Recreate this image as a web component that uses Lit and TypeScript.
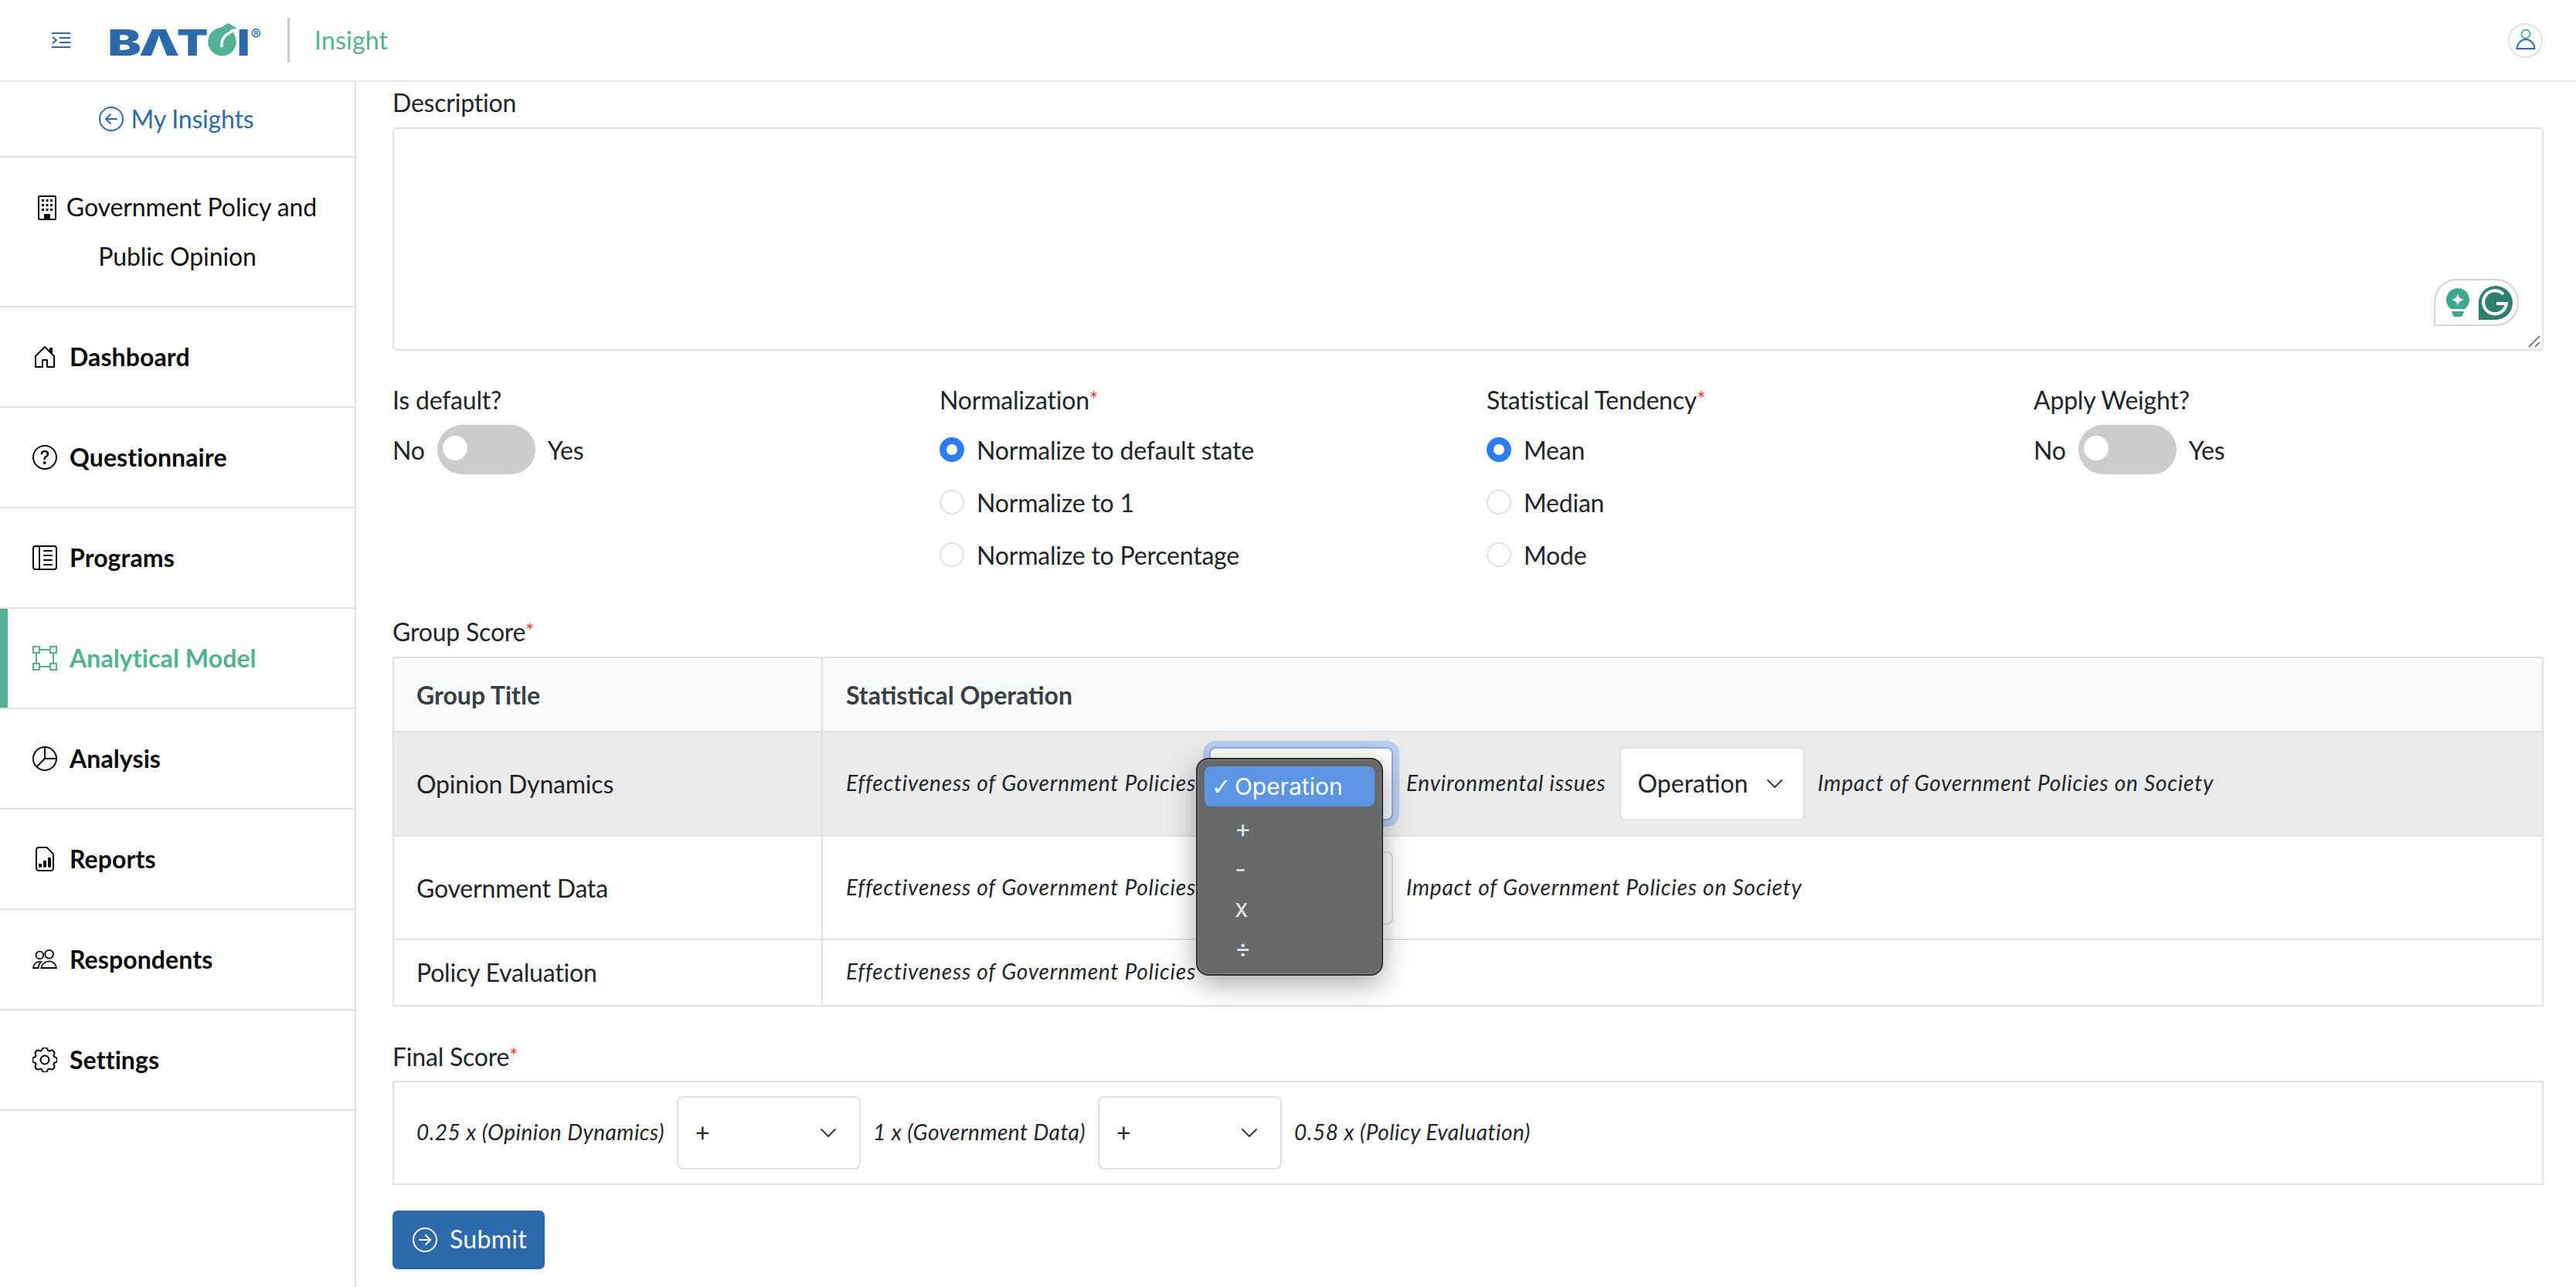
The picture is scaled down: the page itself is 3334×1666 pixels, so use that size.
import { LitElement, html, css, svg } from "lit";
import { customElement } from "lit/decorators.js";

const i16 = (inner: unknown, size = 32) => html`<svg class="ic" width=${size} height=${size} viewBox="0 0 16 16" fill="currentColor">${inner}</svg>`;

const icons: Record<string, unknown> = {
  home: svg`<path d="M8.354 1.146a.5.5 0 0 0-.708 0l-6 6A.5.5 0 0 0 1.5 7.5v7a.5.5 0 0 0 .5.5h4.5a.5.5 0 0 0 .5-.5v-4h2v4a.5.5 0 0 0 .5.5H14a.5.5 0 0 0 .5-.5v-7a.5.5 0 0 0-.146-.354L13 5.793V2.5a.5.5 0 0 0-.5-.5h-1a.5.5 0 0 0-.5.5v1.293L8.354 1.146zM2.5 14V7.707l5.5-5.5 5.5 5.5V14H10v-4a.5.5 0 0 0-.5-.5h-3a.5.5 0 0 0-.5.5v4H2.5z"/>`,
  question: svg`<path d="M8 15A7 7 0 1 1 8 1a7 7 0 0 1 0 14zm0 1A8 8 0 1 0 8 0a8 8 0 0 0 0 16z"/><path d="M5.255 5.786a.237.237 0 0 0 .241.247h.825c.138 0 .248-.113.266-.25.09-.656.54-1.134 1.342-1.134.686 0 1.314.343 1.314 1.168 0 .635-.374.927-.965 1.371-.673.489-1.206 1.06-1.168 1.987l.003.217a.25.25 0 0 0 .25.246h.811a.25.25 0 0 0 .25-.25v-.105c0-.718.273-.927 1.01-1.486.609-.463 1.244-.977 1.244-2.056 0-1.511-1.276-2.241-2.673-2.241-1.267 0-2.655.59-2.75 2.286zm1.557 5.763c0 .533.425.927 1.01.927.609 0 1.028-.394 1.028-.927 0-.552-.42-.94-1.029-.94-.584 0-1.009.388-1.009.94z"/>`,
  programs: svg`<path d="M12.5 3a.5.5 0 0 1 0 1h-5a.5.5 0 0 1 0-1h5zm0 3a.5.5 0 0 1 0 1h-5a.5.5 0 0 1 0-1h5zm.5 3.5a.5.5 0 0 0-.5-.5h-5a.5.5 0 0 0 0 1h5a.5.5 0 0 0 .5-.5zm-.5 2.5a.5.5 0 0 1 0 1h-5a.5.5 0 0 1 0-1h5z"/><path d="M16 2a2 2 0 0 0-2-2H2a2 2 0 0 0-2 2v12a2 2 0 0 0 2 2h12a2 2 0 0 0 2-2V2zM4 1v14H2a1 1 0 0 1-1-1V2a1 1 0 0 1 1-1h2zm1 0h9a1 1 0 0 1 1 1v12a1 1 0 0 1-1 1H5V1z"/>`,
  model: svg`<path d="M5 2V0H0v5h2v6H0v5h5v-2h6v2h5v-5h-2V5h2V0h-5v2H5zm6 1v2h2v6h-2v2H5v-2H3V5h2V3h6zm1-2h3v3h-3V1zm3 11v3h-3v-3h3zM4 15H1v-3h3v3zM1 4V1h3v3H1z"/>`,
  pie: svg`<path d="M7.5 1.018a7 7 0 0 0-4.79 11.566L7.5 7.793V1.018zm1 0V7.5h6.482A7.001 7.001 0 0 0 8.5 1.018zM14.982 8.5H8.207l-4.79 4.79A7 7 0 0 0 14.982 8.5zM0 8a8 8 0 1 1 16 0A8 8 0 0 1 0 8z"/>`,
  report: svg`<path d="M10 13a.4.4 0 0 0 .4.4h1.2a.4.4 0 0 0 .4-.4V7.4a.4.4 0 0 0-.4-.4h-1.2a.4.4 0 0 0-.4.4V13zm-2.6.4A.4.4 0 0 1 7 13V9.4a.4.4 0 0 1 .4-.4h1.2a.4.4 0 0 1 .4.4V13a.4.4 0 0 1-.4.4H7.4zm-3 0A.4.4 0 0 1 4 13v-1.6a.4.4 0 0 1 .4-.4h1.2a.4.4 0 0 1 .4.4V13a.4.4 0 0 1-.4.4H4.4z"/><path fill="none" stroke="currentColor" d="M13.5 14V4.7L9.3.5H4A1.5 1.5 0 0 0 2.5 2v12A1.5 1.5 0 0 0 4 15.5h8a1.5 1.5 0 0 0 1.5-1.5z"/>`,
  people: svg`<g fill="none" stroke="currentColor" stroke-width=".9"><circle cx="4.7" cy="5.2" r="2.4"/><circle cx="10.8" cy="4.6" r="2.7"/><path d="M.5 13.5h3.3c.1-1.6.8-3 1.8-3.9-.4-.1-.8-.2-1.3-.2-2 0-3.6 1.9-3.8 4.1z"/><path d="M5.6 13.5c.3-2.5 2.6-4.3 5.2-4.3s4.5 1.8 4.7 4.3H5.6z"/></g>`,
  gear: svg`<g fill="none" stroke="currentColor"><circle cx="8" cy="8" r="2.75"/><path d="M9.796 1.343c-.527-1.79-3.065-1.79-3.592 0l-.094.319a.873.873 0 0 1-1.255.52l-.292-.16c-1.64-.892-3.433.902-2.54 2.541l.159.292a.873.873 0 0 1-.52 1.255l-.319.094c-1.79.527-1.79 3.065 0 3.592l.319.094a.873.873 0 0 1 .52 1.255l-.16.292c-.892 1.64.901 3.434 2.541 2.54l.292-.159a.873.873 0 0 1 1.255.52l.094.319c.527 1.79 3.065 1.79 3.592 0l.094-.319a.873.873 0 0 1 1.255-.52l.292.16c1.64.893 3.434-.902 2.54-2.541l-.159-.292a.873.873 0 0 1 .52-1.255l.319-.094c1.79-.527 1.79-3.065 0-3.592l-.319-.094a.873.873 0 0 1-.52-1.255l.16-.292c.893-1.64-.902-3.433-2.541-2.54l-.292.159a.873.873 0 0 1-1.255-.52l-.094-.319z"/></g>`,
};

const nav = [
  ["Dashboard", "home"],
  ["Questionnaire", "question"],
  ["Programs", "programs"],
  ["Analytical Model", "model"],
  ["Analysis", "pie"],
  ["Reports", "report"],
  ["Respondents", "people"],
  ["Settings", "gear"],
];

const chevron = html`<svg class="chev" width="22" height="13" viewBox="0 0 22 13"><path d="M2 2l9 9 9-9" fill="none" stroke="#343a40" stroke-width="2" stroke-linecap="round" stroke-linejoin="round"/></svg>`;

@customElement("app-root")
export class AppRoot extends LitElement {
  static styles = css`
    :host { display: block; width: 3334px; height: 1666px; overflow: hidden; background: #fff; color: #212529;
      font-family: "Lato", "Open Sans", sans-serif; font-size: 32px; letter-spacing: -.2px; }
    * { box-sizing: border-box; }
    .ic { display: block; flex: none; }

    header { height: 106px; border-bottom: 2px solid #e3e5e8; display: flex; align-items: center; }
    .menu { margin-left: 67px; color: #2d6aac; display: block; }
    .logo { margin-left: 51px; display: block; overflow: visible; }
    .sep { width: 3px; height: 58px; background: #ccc; margin-left: 32px; }
    .product { margin-left: 32px; padding-bottom: 2px; color: #53b196; font-size: 32px; letter-spacing: .2px; }
    .profile { margin-left: auto; margin-right: 43px; width: 45px; height: 45px; border: 2px solid #dee2e6; border-radius: 50%; display: flex; align-items: center; justify-content: center; }

    .body { display: flex; height: 1560px; }
    aside { width: 461px; flex: none; border-right: 2px solid #dee2e6; }
    .back { height: 98px; border-bottom: 2px solid #dee2e6; display: flex; align-items: center; justify-content: center; gap: 10px; color: #2d6aac; padding-right: 3px; }
    .back span { padding-bottom: 2px; }
    .project { height: 194px; border-bottom: 2px solid #dee2e6; padding: 32px 30px 0; text-align: center; line-height: 64px; color: #111; letter-spacing: -.1px; }
    .project svg { display: inline-block; vertical-align: -5px; margin-right: 13px; }
    .item { height: 130px; border-bottom: 2px solid #dee2e6; display: flex; align-items: center; gap: 16px; padding-left: 42px; font-weight: 700; color: #0a0a0a; letter-spacing: .1px; }
    .item span { padding-bottom: 2px; }
    .item.active { color: #53b196; box-shadow: inset 10px 0 0 #53b196; }

    main { flex: 1; padding: 3px 42px 0 47px; min-width: 0; }
    .lbl { line-height: 48px; height: 48px; margin-bottom: 8px; }
    .lbl i { color: #e53935; font-style: normal; font-size: 26px; line-height: 0; vertical-align: 3px; }
    .textarea { height: 289px; border: 2px solid #dee2e6; border-radius: 6px; position: relative; }
    .gram { position: absolute; left: 2640px; top: 194px; width: 110px; height: 61px; border: 2px solid #d2d3dc; border-radius: 30px 30px 30px 0; display: flex; align-items: center; gap: 12px; padding-left: 14px; background: #fff; }
    .grip { position: absolute; right: 2px; bottom: 2px; }

    .opts { display: grid; grid-template-columns: repeat(4, 1fr); column-gap: 48px; margin-top: 40px; }
    .switch-row { display: flex; align-items: center; gap: 16px; height: 64px; }
    .switch { width: 127px; height: 64px; border-radius: 32px; background: #ccc; padding: 14px 0 0 7px; }
    .switch span { display: block; width: 32px; height: 32px; border-radius: 50%; background: #fff; }
    .radios { display: flex; flex-direction: column; gap: 4px; }
    .radio { display: flex; align-items: center; gap: 16px; height: 64px; }
    .dot { width: 32px; height: 32px; border-radius: 50%; border: 2px solid #dee2e6; flex: none; }
    .dot.on { border: 9.5px solid #2f7bf0; }

    .group { margin-top: 44px; }
    table { width: 100%; border-collapse: separate; border-spacing: 0; table-layout: fixed; border-top: 2px solid #dee2e6; border-left: 2px solid #dee2e6; }
    th, td { border-right: 2px solid #dee2e6; border-bottom: 2px solid #dee2e6; padding: 0 30px; text-align: left; font-weight: 400; }
    th:first-child, td:first-child { padding-left: 29px; }
    col.c1 { width: 555px; }
    th { height: 96px; background: #f8f9fa; font-weight: 700; color: #3a3f45; letter-spacing: 0; }
    tr.hl td { background: #ebebeb; }
    .r1 td { height: 135px; } .r2 td { height: 134px; } .r3 td { height: 86px; padding-bottom: 2px; }
    .ops { display: flex; align-items: center; gap: 17px; font-style: italic; font-size: 28px; letter-spacing: .8px; }
    .ops > span { padding-bottom: 3px; }
    .sel { position: relative; width: 238px; height: 95px; border: 2px solid #dee2e6; border-radius: 8px; background: #fff; display: flex; align-items: center; padding: 0 29px 0 22px; justify-content: space-between; font-style: normal; font-size: 32px; letter-spacing: -.2px; flex: none; }
    .sel > span { padding-bottom: 2px; }
    .sel.focus { border-color: #86aef0; box-shadow: 0 0 0 8px #b8cdef; }
    .sel.plain { width: 240px; border-color: #e4e4e7; padding: 0 26px 0 22px; letter-spacing: 0; }

    .popup { position: absolute; left: -19px; top: 12px; width: 242px; height: 282px; background: #67696b; border: 2px solid #2e2f31; border-radius: 16px; box-shadow: inset 0 0 0 1px #85878a, 0 10px 36px rgba(0,0,0,.35); padding: 9px 9px 0; font-family: "Inter", sans-serif; font-size: 32px; letter-spacing: 0; color: #e6e6e6; z-index: 5; }
    .popup div { height: 51.5px; padding-left: 39px; display: flex; align-items: center; position: relative; }
    .popup .cur { height: 52px; margin-bottom: 3px; background: #5c95e2; color: #fff; border-radius: 8px; font-size: 30px; }
    .popup .cur b { position: absolute; left: 9px; font-family: "DejaVu Sans", sans-serif; font-weight: 700; font-size: 30px; }

    .final { margin-top: 41px; }
    .final .lbl { margin-bottom: 7px; }
    .fbox { height: 135px; border: 2px solid #dee2e6; padding: 0 0 0 29px; gap: 16px; letter-spacing: .5px; }
    .fbox .sel { width: 238px; }
    .submit { margin-top: 33px; width: 197px; height: 76px; border: 0; border-radius: 7px; background: #2d6aac; color: #fff; display: flex; align-items: center; gap: 16px; padding: 0 0 3px 26px; font: inherit; letter-spacing: .3px; }
    .submit svg { margin-top: 3px; }
  `;

  private sel(label: string, extra = "") {
    return html`<div class="sel ${extra}"><span>${label}</span>${chevron}</div>`;
  }

  render() {
    return html`
      <header>
        <svg class="menu" width="24" height="20" viewBox="0 0 24 20" fill="none" stroke="currentColor" stroke-width="2"><path d="M0 1h24M10 7h14M10 13h14M0 19h24M1 6l5 4-5 4"/></svg>
        <svg class="logo" width="198" height="44" viewBox="142 27 198 44" role="img" aria-label="BATOI logo">
          <g font-family="Inter" font-weight="900" font-size="47" fill="#2d6aac">
            <text x="139.500" y="69" textLength="43" lengthAdjust="spacingAndGlyphs">B</text>
            <text x="180" y="69" textLength="52" lengthAdjust="spacingAndGlyphs">Λ</text>
            <text x="229" y="69" textLength="40" lengthAdjust="spacingAndGlyphs">T</text>
            <text x="307" y="69" textLength="16" lengthAdjust="spacingAndGlyphs">I</text>
          </g>
          <circle cx="287.5" cy="51" r="18.3" fill="#53b196"/>
          <path d="M279 42C281 35 289 30 296 27l11 7c-7 0-14 3-17 9z" fill="#53b196"/>
          <path d="M287 58c-1-9 3-16 13-20" fill="none" stroke="#fff" stroke-width="3.5"/>
          <text x="324.500" y="49" font-family="Inter" font-size="20" fill="#2d6aac">®</text>
        </svg>
        <div class="sep"></div>
        <div class="product">Insight</div>
        <div class="profile">
          <svg width="26" height="36" viewBox="0 0 26 36" fill="none" stroke-width="2"><circle cx="13" cy="10" r="5.5" stroke="#53b196"/><path d="M1.5 29C2 22 7 17 13 17s11 5 11.500 12z" stroke="#2d6aac"/></svg>
        </div>
      </header>
      <div class="body">
        <aside>
          <div class="back">${i16(svg`<path d="M1 8a7 7 0 1 0 14 0A7 7 0 0 0 1 8zm15 0A8 8 0 1 1 0 8a8 8 0 0 1 16 0zm-4.500-.5a.5.5 0 0 1 0 1H5.707l2.147 2.146a.5.5 0 0 1-.708.708l-3-3a.5.5 0 0 1 0-.708l3-3a.5.5 0 1 1 .708.708L5.707 7.500H11.500z"/>`)}<span>My Insights</span></div>
          <div class="project">
            <svg width="24" height="32" viewBox="0 0 24 32"><rect x="1" y="1" width="22" height="30" rx="1" fill="none" stroke="#111" stroke-width="2"/><g fill="#111"><rect x="5" y="5" width="3" height="3"/><rect x="10.500" y="5" width="3" height="3"/><rect x="16" y="5" width="3" height="3"/><rect x="5" y="11" width="3" height="3"/><rect x="10.500" y="11" width="3" height="3"/><rect x="16" y="11" width="3" height="3"/><rect x="5" y="17" width="3" height="3"/><rect x="10.500" y="17" width="3" height="3"/><rect x="16" y="17" width="3" height="3"/><rect x="8" y="24" width="8" height="7"/></g></svg>Government Policy and Public Opinion
          </div>
          ${nav.map(([label, ic]) => html`<div class="item ${label === "Analytical Model" ? "active" : ""}">${i16(icons[ic])}<span>${label}</span></div>`)}
        </aside>
        <main>
          <div class="lbl">Description</div>
          <div class="textarea">
            <div class="gram">
              <svg width="30" height="38" viewBox="0 0 30 38"><path d="M15 0a15 15 0 0 1 9 27H6A15 15 0 0 1 15 0z" fill="#3fa78f"/><path d="M15 7c1 5 3 7 8 8-5 1-7 3-8 8-1-5-3-7-8-8 5-1 7-3 8-8z" fill="#fff"/><path d="M7 30h16l-2 6a2 2 0 0 1-2 1h-8a2 2 0 0 1-2-1z" fill="#3fa78f"/></svg>
              <svg width="44" height="44" viewBox="0 0 44 44"><path d="M22 0a22 22 0 0 1 0 44H0V22A22 22 0 0 1 22 0z" fill="#2f7f6e"/><path d="M32 11A15 15 0 1 0 36 23H23" fill="none" stroke="#fff" stroke-width="4"/></svg>
            </div>
            <svg class="grip" width="16" height="16" viewBox="0 0 16 16" stroke="#555" stroke-width="1.500"><path d="M1 15L15 1M9 15l6-6"/></svg>
          </div>
          <div class="opts">
            <div>
              <div class="lbl">Is default?</div>
              <div class="switch-row"><span>No</span><div class="switch"><span></span></div><span>Yes</span></div>
            </div>
            <div>
              <div class="lbl">Normalization<i>*</i></div>
              <div class="radios">
                <div class="radio"><span class="dot on"></span>Normalize to default state</div>
                <div class="radio"><span class="dot"></span>Normalize to 1</div>
                <div class="radio"><span class="dot"></span>Normalize to Percentage</div>
              </div>
            </div>
            <div>
              <div class="lbl">Statistical Tendency<i>*</i></div>
              <div class="radios">
                <div class="radio"><span class="dot on"></span>Mean</div>
                <div class="radio"><span class="dot"></span>Median</div>
                <div class="radio"><span class="dot"></span>Mode</div>
              </div>
            </div>
            <div>
              <div class="lbl">Apply Weight?</div>
              <div class="switch-row"><span>No</span><div class="switch"><span></span></div><span>Yes</span></div>
            </div>
          </div>
          <div class="group">
            <div class="lbl">Group Score<i>*</i></div>
            <table>
              <colgroup><col class="c1" /><col /></colgroup>
              <tr><th>Group Title</th><th>Statistical Operation</th></tr>
              <tr class="hl r1">
                <td>Opinion Dynamics</td>
                <td><div class="ops"><span>Effectiveness of Government Policies</span>
                  <div class="sel focus"><div class="popup">
                    <div class="cur"><b>✓</b>Operation</div><div>+</div><div>-</div><div>x</div><div>÷</div>
                  </div></div>
                  <span>Environmental issues</span>${this.sel("Operation", "plain")}<span>Impact of Government Policies on Society</span></div></td>
              </tr>
              <tr class="r2">
                <td>Government Data</td>
                <td><div class="ops"><span>Effectiveness of Government Policies</span><div class="sel"></div><span>Impact of Government Policies on Society</span></div></td>
              </tr>
              <tr class="r3">
                <td>Policy Evaluation</td>
                <td><div class="ops"><span>Effectiveness of Government Policies</span></div></td>
              </tr>
            </table>
          </div>
          <div class="final">
            <div class="lbl">Final Score<i>*</i></div>
            <div class="ops fbox"><span>0.25 x (Opinion Dynamics)</span>${this.sel("+")}<span>1 x (Government Data)</span>${this.sel("+")}<span>0.58 x (Policy Evaluation)</span></div>
          </div>
          <button class="submit">${i16(svg`<path d="M1 8a7 7 0 1 0 14 0A7 7 0 0 0 1 8zm15 0A8 8 0 1 1 0 8a8 8 0 0 1 16 0zM4.500 7.500a.5.5 0 0 0 0 1h5.793l-2.147 2.146a.5.5 0 0 0 .708.708l3-3a.5.5 0 0 0 0-.708l-3-3a.5.5 0 1 0-.708.708L10.293 7.500H4.500z"/>`)}Submit</button>
        </main>
      </div>
    `;
  }
}
